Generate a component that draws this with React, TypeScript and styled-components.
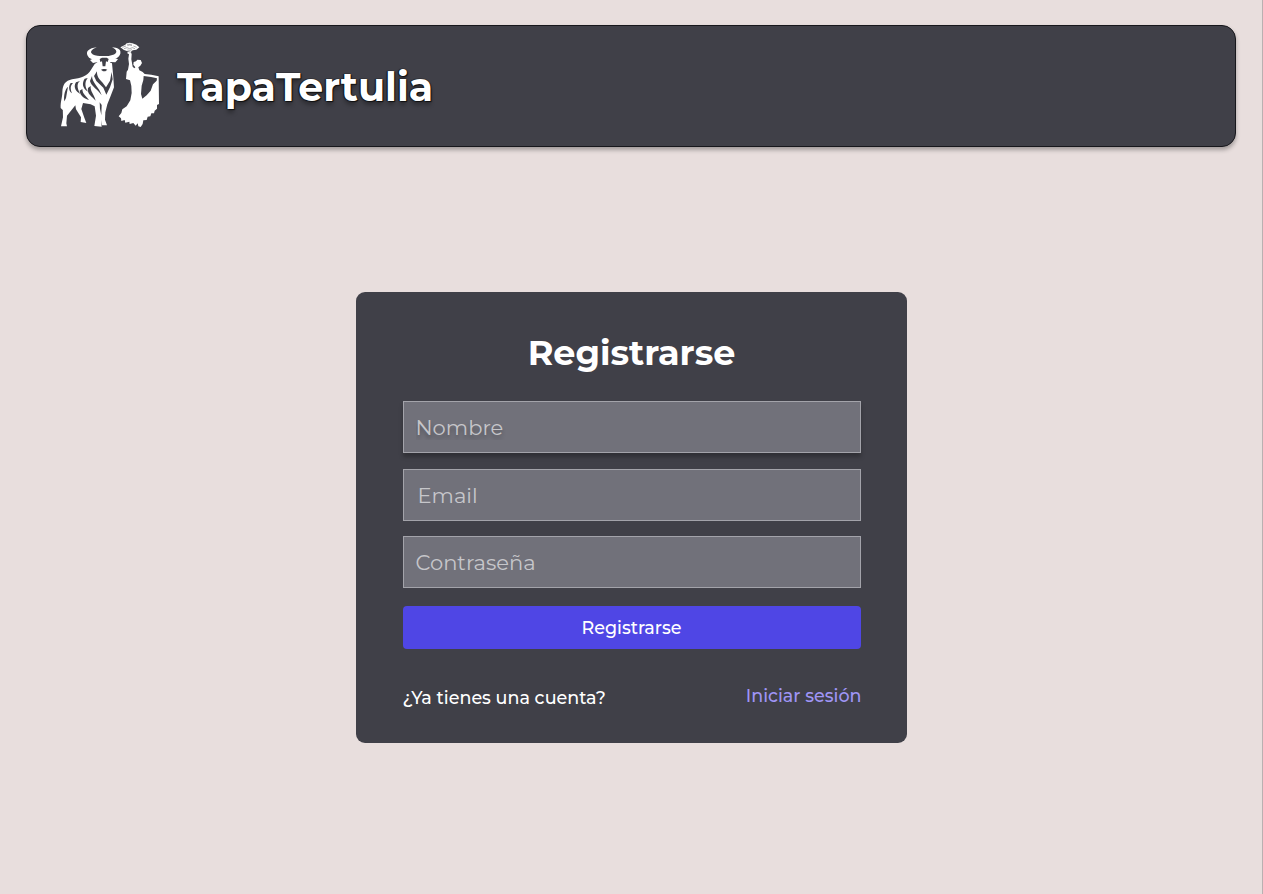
import React from "react";
import styled, { createGlobalStyle } from "styled-components";

const GlobalStyle = createGlobalStyle`
  *, *::before, *::after { box-sizing: border-box; }
  body {
    margin: 0;
    background: #e8dedd;
    font-family: Montserrat, Inter, "Open Sans", sans-serif;
    color: #fff;
  }
`;

const Page = styled.div`
  display: flex;
  flex-direction: column;
  align-items: center;
  width: 100%;
  height: 894px;
  padding: 25px 26px 0;
  border-right: 1px solid #b9b0b1;
`;

const Header = styled.header`
  display: flex;
  align-items: center;
  align-self: flex-start;
  width: 1210px;
  height: 122px;
  padding-left: 23px;
  background: #404048;
  border: 1.5px solid #17171c;
  border-radius: 14px;
  box-shadow: 0 3px 4px rgba(0, 0, 0, 0.3);
`;

const Logo = styled.svg`
  flex: none;
  width: 120px;
  height: 100px;
  margin-top: -4px;
`;

const Brand = styled.span`
  margin: 2px 0 0 7px;
  font-size: 39.5px;
  line-height: 48px;
  font-weight: 700;
  text-shadow: 0 0 1px #000, 1px 1px 1px #111, -1px 0 1px #111, 0 4px 4px rgba(0, 0, 0, 0.3);
`;

const Card = styled.main`
  display: flex;
  flex-direction: column;
  width: 551px;
  height: 450.5px;
  margin-top: 145px;
  padding: 38px 46px 0 47px;
  background: #404048;
  border-radius: 9px;
`;

const Title = styled.h1`
  margin: 0;
  text-align: center;
  font-size: 35px;
  line-height: 46px;
  font-weight: 700;
`;

const Form = styled.form`
  display: flex;
  flex-direction: column;
  gap: 15.5px;
  margin-top: 25px;
`;

const Input = styled.input<{ $raised?: boolean; $indent: number }>`
  width: 458px;
  height: 52px;
  padding: 1px 12px ${(p) => (p.$raised ? 1 : 0)}px ${(p) => p.$indent}px;
  background: #71717a;
  border: 1px solid #a3a3aa;
  border-radius: 0;
  outline: none;
  color: #fff;
  font: 400 21.05px/26px Montserrat, Inter, "Open Sans", sans-serif;
  box-shadow: ${(p) => (p.$raised ? "0 4px 4px rgba(0, 0, 0, 0.25)" : "none")};
  text-shadow: ${(p) => (p.$raised ? "0 4px 4px rgba(0, 0, 0, 0.25)" : "none")};

  &::placeholder { color: #c6c6ca; opacity: 1; }
`;

const Submit = styled.button`
  width: 458px;
  height: 43.5px;
  margin-top: 2px;
  padding: 1px 0 0;
  border: 0;
  border-radius: 4px;
  background: #4f46e5;
  color: #fff;
  font: 500 17.54px/22px Montserrat, Inter, "Open Sans", sans-serif;
`;

const Footer = styled.div`
  display: flex;
  justify-content: space-between;
  margin-top: 35px;
  font-size: 17.54px;
  line-height: 24px;
  font-weight: 500;
`;

const Question = styled.span`
  padding-top: 2px;
`;

const Link = styled.a`
  margin-right: -1px;
  color: #9f95f5;
`;

function TapaLogo() {
  return (
    <Logo viewBox="0 0 360 300" fill="#fff" aria-hidden="true">
      {/* bull: tail, body and legs */}
      <path d="M124 106C112 128 92 132 66 136C46 140 38 152 37 174C37 192 31 202 32 222L39 229L44 218L43 202C40 184 46 164 54 158L48 192L38 212L39 250L33 277L51 277L49 268L51 245L76 214L78 226L93 250L92 264L109 267L103 251L94 225L99 207L122 211L134 217L138 245L133 276L155 278L153 258L156 274L171 274L165 257L166 235L172 211L181 188L192 160L190 130L186 88L168 82L146 82L134 90Z" />
      {/* bull: horns and crown */}
      <path d="M140 40C117 42 106 53 113 65C119 77 134 78 148 76L176 76C192 78 207 72 211 59C214 46 203 41 186 40C198 46 202 53 197 58C191 64 183 64 176 66H149C139 65 129 64 124 57C121 51 128 45 140 40Z" />
      {/* bull: ears, head and muzzle */}
      <path d="M148 66L120 78L129 87L143 84L148 98L147 110L155 119L170 119L177 110L176 98L181 84L196 85L204 76L177 66Z" />
      {/* bull: face and hair shading */}
      <g fill="#404048">
        <path d="M149 75L156 71H170L176 75L173 84L168 82L166 97H158L156 82L151 84Z" />
        <path d="M153 107L159 105H166L172 107L166 112H159Z" />
        <path d="M141 112C140 126 147 136 158 146L168 160L180 140L185 114L188 136L180 160L169 182L160 161L139 141L132 126Z" />
        <path d="M126 126C126 146 148 160 155 184C143 166 124 157 120 141Z" />
        <path d="M113 132C103 145 105 160 114 173C96 162 96 146 104 134Z" />
        <path d="M122 156C120 172 132 180 137 200C127 187 110 181 114 162Z" />
        <path d="M90 141C77 151 84 168 91 180C79 174 68 160 78 145Z" />
        <path d="M97 165C97 181 110 187 117 198C104 194 91 187 89 170Z" />
        <path d="M69 147C59 157 62 167 66 178C57 172 54 158 62 147Z" />
        <path d="M149 205L155 213L154 244L150 224Z" />
      </g>
      {/* dancer: fan */}
      <path d="M211 40L226 32L230 28L239 26L247 28L259 32L268 40L259 47L248 49L242 54L233 52L222 48Z" />
      <path d="M217 40L228 36M232 35L239 33L246 35M250 36L260 40M222 44L231 41L239 44L247 41L255 44M232 48L239 49L246 47M231 31H246" fill="none" stroke="#404048" strokeWidth="1.8" opacity="0.7" />
      {/* dancer: arm, head, torso and ruffled dress */}
      <path d="M234 54L243 55L245 61L244 76L248 98L253 103L256 100L250 92L251 84L258 82L262 77L272 78L276 87L271 95L265 100L268 109L278 114L284 120L304 122L326 127L327 210L321 213L321 224L314 230L312 238L304 238L301 247L293 248L290 258L280 259L278 270L272 279L265 277L263 268L257 275L250 267L239 270L238 263L226 266L224 258L214 261L213 253L206 247L214 237L217 226L230 217L241 199L245 177L244 156L240 139L228 135L230 113L234 107L237 90L235 74L237 61L231 57Z" />
      <path d="M281 126L303 129L321 133L320 140L309 151L302 170L290 184L277 194L273 180L275 155L280 138Z" fill="#404048" />
    </Logo>
  );
}

export default function App() {
  return (
    <>
      <GlobalStyle />
      <Page>
        <Header>
          <TapaLogo />
          <Brand>TapaTertulia</Brand>
        </Header>
        <Card>
          <Title>Registrarse</Title>
          <Form>
            <Input $raised $indent={12} type="text" placeholder="Nombre" />
            <Input $indent={14} type="email" placeholder="Email" />
            <Input $indent={12} type="password" placeholder="Contraseña" />
            <Submit type="button">Registrarse</Submit>
          </Form>
          <Footer>
            <Question>¿Ya tienes una cuenta?</Question>
            <Link>Iniciar sesión</Link>
          </Footer>
        </Card>
      </Page>
    </>
  );
}
